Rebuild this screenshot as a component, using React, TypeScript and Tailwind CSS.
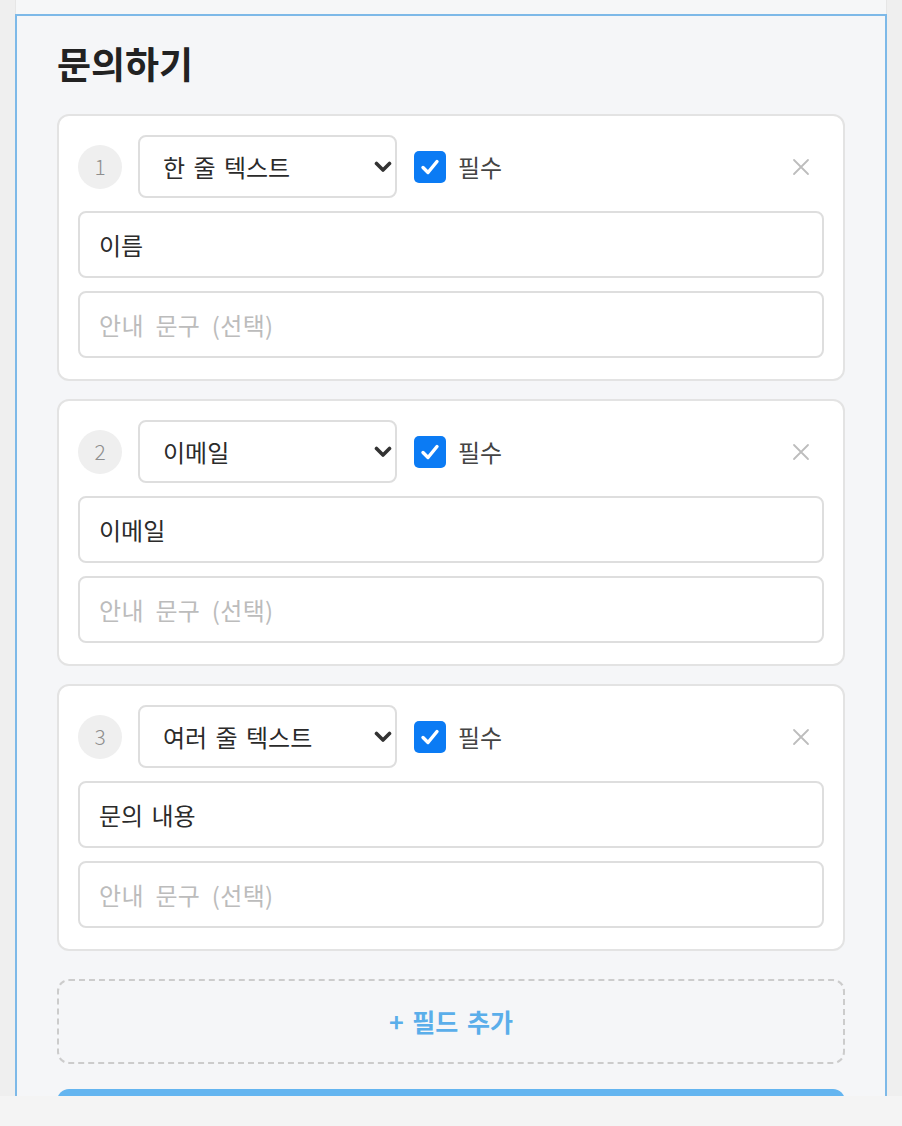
import React from "react";

const font = { fontFamily: '"Noto Sans CJK KR", "Noto Sans", sans-serif' };

function Chevron() {
  return (
    <svg width="18" height="12" viewBox="0 0 18 12" className="shrink-0">
      <polyline points="2.5,2.5 9,9 15.5,2.5" fill="none" stroke="#333" strokeWidth="3.6" strokeLinecap="round" strokeLinejoin="round" />
    </svg>
  );
}

function Check() {
  return (
    <div className="flex h-[32px] w-[32px] shrink-0 items-center justify-center rounded-[5px] bg-[#0b7bf4]">
      <svg width="22" height="22" viewBox="0 0 22 22">
        <polyline points="4,11.5 9,16.5 18,5.5" fill="none" stroke="#fff" strokeWidth="3.4" strokeLinecap="round" strokeLinejoin="round" />
      </svg>
    </div>
  );
}

function Close() {
  return (
    <svg width="18" height="18" viewBox="0 0 18 18" className="shrink-0">
      <path d="M2 2 L16 16 M16 2 L2 16" stroke="#bdbdbd" strokeWidth="1.8" strokeLinecap="round" />
    </svg>
  );
}

function FieldCard({ n, type, label }: { n: number; type: string; label: string }) {
  return (
    <div className="rounded-[12px] border-2 border-[#e3e3e3] bg-white px-[19px] pt-[19px] pb-[21px]">
      <div className="flex h-[63px] items-center">
        <div className="flex h-[44px] w-[44px] shrink-0 items-center justify-center rounded-full bg-[#efefef] text-[21px] font-light text-[#8e8e8e]">
          {n}
        </div>
        <div className="ml-[16px] flex h-[63px] w-[259px] shrink-0 items-center justify-between rounded-[8px] border-2 border-[#dedede] bg-white pl-[23px] pr-[3px]">
          <span className="text-[24px] text-[#2b2b2b] [word-spacing:3px]">{type}</span>
          <Chevron />
        </div>
        <div className="ml-[17px] flex items-center">
          <Check />
          <span className="ml-[12px] text-[24px] text-[#444]">필수</span>
        </div>
        <div className="ml-auto mr-[14px] flex items-center">
          <Close />
        </div>
      </div>
      <div className="mt-[13px] flex h-[67px] items-center rounded-[8px] border-2 border-[#dedede] pl-[19px] text-[24px] text-[#2b2b2b] [word-spacing:3px]">
        {label}
      </div>
      <div className="mt-[13px] flex h-[67px] items-center rounded-[8px] border-2 border-[#dedede] pl-[19px] text-[24px] text-[#bcbcbc] [word-spacing:6px] tracking-[0.3px]">
        안내 문구 (선택)
      </div>
    </div>
  );
}

export default function App() {
  return (
    <div className="min-h-[1126px] w-full bg-[#f4f4f4]" style={font}>
      <div className="h-[1096px] overflow-hidden bg-[#efefef] px-[15px]">
        <div className="h-[14px] border-x border-[#e6e6e6] bg-[#f6f7f8]" />
        <div className="h-[1100px] border-2 border-b-0 border-[#7db9e8] bg-[#f5f6f8] px-[40px] pt-[20px]">
          <h1 className="text-[37px] font-semibold leading-[54px] text-[#222]">문의하기</h1>
          <div className="mt-[24px] flex flex-col gap-[18px]">
            <FieldCard n={1} type="한 줄 텍스트" label="이름" />
            <FieldCard n={2} type="이메일" label="이메일" />
            <FieldCard n={3} type="여러 줄 텍스트" label="문의 내용" />
          </div>
          <div className="mt-[28px] flex h-[85px] items-center justify-center rounded-[12px] border-2 border-dashed border-[#cccccc] text-[25px] font-bold text-[#5aaeea] [word-spacing:3px]">
            + 필드 추가
          </div>
          <div className="mt-[25px] h-[70px] rounded-[12px] bg-[#64b5f0]" />
        </div>
      </div>
    </div>
  );
}
